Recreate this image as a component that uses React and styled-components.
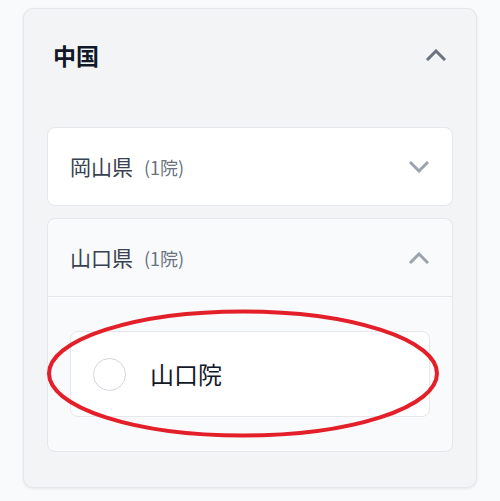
import React from "react";
import styled, { createGlobalStyle } from "styled-components";

const GlobalStyle = createGlobalStyle`
  * { box-sizing: border-box; }
  body {
    margin: 0;
    background: #f9fafb;
    font-family: "Noto Sans CJK JP", "Noto Sans", sans-serif;
  }
`;

const Page = styled.div`
  position: relative;
  width: 500px;
  height: 501px;
  padding: 8px 23px 0 23px;
`;

const Region = styled.div`
  background: #f3f4f6;
  border: 1px solid #e5e7eb;
  border-radius: 10px;
  box-shadow: 0 1px 3px rgba(0, 0, 0, 0.08);
  padding: 0 23px 35px 23px;
`;

const RegionHeader = styled.div`
  display: flex;
  align-items: center;
  justify-content: space-between;
  height: 92px;
  padding: 0 7px 0 6px;
  margin-bottom: 26px;
  h2 {
    margin: 0;
    font-size: 23px;
    line-height: 1;
    font-weight: 700;
    color: #111827;
  }
`;

const List = styled.div`
  display: flex;
  flex-direction: column;
  gap: 12px;
`;

const Pref = styled.div`
  background: ${(p) => (p.open ? "#f9fafb" : "#ffffff")};
  border: 1px solid #e5e7eb;
  border-radius: 8px;
  overflow: hidden;
`;

const PrefHeader = styled.div`
  display: flex;
  align-items: center;
  justify-content: space-between;
  height: ${(p) => (p.open ? "78px" : "77px")};
  padding: 0 23px 0 22px;
  border-bottom: ${(p) => (p.open ? "1px solid #e5e7eb" : "none")};
`;

const PrefName = styled.span`
  font-size: 21px;
  line-height: 1;
  color: #374151;
  span {
    margin-left: 11px;
    font-size: 18px;
    color: #6b7280;
  }
`;

const PrefBody = styled.div`
  padding: 34px 22px 34px 22px;
`;

const Clinic = styled.label`
  display: flex;
  align-items: center;
  gap: 24px;
  height: 86px;
  padding: 0 22px;
  background: #ffffff;
  border: 1px solid #e5e7eb;
  border-radius: 8px;
  font-size: 24px;
  line-height: 1;
  color: #111827;
`;

const Radio = styled.span`
  width: 33px;
  height: 33px;
  border-radius: 50%;
  border: 1.5px solid #d1d5db;
  background: #fff;
`;

const Mark = styled.svg`
  position: absolute;
  left: 0;
  top: 0;
  pointer-events: none;
`;

const Chevron = ({ up, color }) => (
  <svg width="20" height="12" viewBox="0 0 20 12" fill="none">
    <path
      d={up ? "M2 10 L10 2 L18 10" : "M2 2 L10 10 L18 2"}
      stroke={color}
      strokeWidth="3"
      strokeLinecap="square"
      strokeLinejoin="miter"
    />
  </svg>
);

export default function App() {
  return (
    <Page>
      <GlobalStyle />
      <Region>
        <RegionHeader>
          <h2>中国</h2>
          <Chevron up color="#6b7280" />
        </RegionHeader>
        <List>
          <Pref>
            <PrefHeader>
              <PrefName>
                岡山県<span>(1院)</span>
              </PrefName>
              <Chevron color="#9ca3af" />
            </PrefHeader>
          </Pref>
          <Pref open>
            <PrefHeader open>
              <PrefName>
                山口県<span>(1院)</span>
              </PrefName>
              <Chevron up color="#9ca3af" />
            </PrefHeader>
            <PrefBody>
              <Clinic>
                <Radio />
                山口院
              </Clinic>
            </PrefBody>
          </Pref>
        </List>
      </Region>
      <Mark width="500" height="501">
        <ellipse cx="243" cy="373.5" rx="194" ry="62" fill="none" stroke="#e3202a" strokeWidth="4" />
      </Mark>
    </Page>
  );
}
